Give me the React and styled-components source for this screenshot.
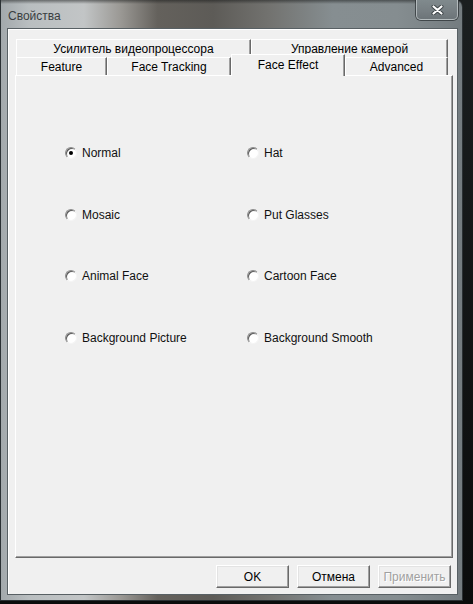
import styled, { createGlobalStyle } from "styled-components";

const GlobalStyle = createGlobalStyle`
  html, body {
    margin: 0;
    padding: 0;
    background: #0e1011;
  }
  body {
    font-family: "Liberation Sans", Arial, sans-serif;
    font-size: 12px;
    color: #000;
  }
`;

const backTabs = [
    { label: "Усилитель видеопроцессора", width: 235 },
    { label: "Управление камерой", width: 197 },
];

const frontTabs = [
    { label: "Feature", width: 91 },
    { label: "Face Tracking", width: 124 },
    { label: "Face Effect", width: 114, active: true },
    { label: "Advanced", width: 103 },
];

const options = [
    { label: "Normal", checked: true },
    { label: "Hat" },
    { label: "Mosaic" },
    { label: "Put Glasses" },
    { label: "Animal Face" },
    { label: "Cartoon Face" },
    { label: "Background Picture" },
    { label: "Background Smooth" },
];

const App = () => {
    return (
        <Screen>
            <GlobalStyle />
            <Window>
                <TitleBar>
                    <Title>Свойства</Title>
                    <CloseButton>
                        <svg width="13" height="10" viewBox="0 0 13 10">
                            <path d="M2.5 1.5 L10.5 8.5 M10.5 1.5 L2.5 8.5" stroke="#3b4245" strokeWidth="4" strokeLinecap="round" />
                            <path d="M2.5 1.5 L10.5 8.5 M10.5 1.5 L2.5 8.5" stroke="#ffffff" strokeWidth="2.2" strokeLinecap="round" />
                        </svg>
                    </CloseButton>
                </TitleBar>
                <Client>
                    <TabControl>
                        <TabRow>
                            {backTabs.map((t) => (
                                <Tab key={t.label} $width={t.width}>{t.label}</Tab>
                            ))}
                        </TabRow>
                        <TabRow>
                            {frontTabs.map((t) => (
                                <Tab key={t.label} $width={t.width} $active={t.active}>{t.label}</Tab>
                            ))}
                        </TabRow>
                        <TabPage>
                            <OptionGrid>
                                {options.map((o) => (
                                    <Option key={o.label}>
                                        <RadioMark $checked={o.checked} />
                                        <span>{o.label}</span>
                                    </Option>
                                ))}
                            </OptionGrid>
                        </TabPage>
                    </TabControl>
                    <ButtonRow>
                        <Button>OK</Button>
                        <Button>Отмена</Button>
                        <Button disabled>Применить</Button>
                    </ButtonRow>
                </Client>
            </Window>
        </Screen>
    );
};

const Screen = styled.div`
width: 473px;
height: 604px;
overflow: hidden;
background: linear-gradient(180deg, #1b1f20 0%, #0b0c0c 100%);
`;

const Window = styled.div`
width: 463px;
height: 601px;
box-sizing: border-box;
display: flex;
flex-direction: column;
padding: 0 4px 5px 6px;
border: 1px solid #2b3134;
border-top: none;
border-radius: 0 7px 0 0;
background:
    linear-gradient(180deg, rgba(20, 22, 22, 0.5) 0px, rgba(20, 22, 22, 0) 4px),
    linear-gradient(90deg, #a3a9ac 0%, #b9bec0 6%, #c2c5c6 18%, #9a9894 26%, #64615c 34%, #5d5b57 46%, #72726f 58%, #868e91 72%, #858d90 86%, #747c80 100%);
`;

const TitleBar = styled.div`
height: 28px;
flex-shrink: 0;
display: flex;
justify-content: space-between;
align-items: flex-start;
`;

const Title = styled.div`
margin: 9px 0 0 1px;
font-size: 12px;
line-height: 14px;
color: #3a3e41;
`;

const CloseButton = styled.div`
width: 42px;
height: 20px;
box-sizing: border-box;
display: flex;
align-items: center;
justify-content: center;
border: 1px solid rgba(225, 230, 232, 0.55);
border-top: none;
border-radius: 0 0 5px 5px;
box-shadow: 0 0 0 1px rgba(40, 46, 49, 0.7);
background: linear-gradient(180deg, #808a8d 0%, #767e82 60%, #6c7478 100%);
`;

const Client = styled.div`
flex: 1;
display: flex;
flex-direction: column;
padding: 10px 4px 6px 7px;
background: #f0f0f0;
border: 1px solid #586064;
box-shadow: inset 1px 1px 0 #ffffff;
`;

const TabControl = styled.div`
flex: 1;
display: flex;
flex-direction: column;
`;

const TabRow = styled.div`
display: flex;
margin-left: 1px;
height: 18px;
flex-shrink: 0;
`;

const Tab = styled.div`
width: ${(p) => p.$width}px;
height: ${(p) => (p.$active ? 22 : 18)}px;
margin-top: ${(p) => (p.$active ? -3 : 0)}px;
box-sizing: border-box;
padding-top: ${(p) => (p.$active ? 1 : 1)}px;
text-align: center;
line-height: ${(p) => (p.$active ? 19 : 17)}px;
white-space: nowrap;
background: #f0f0f0;
border-top: 1px solid #ffffff;
border-left: 1px solid #ffffff;
border-right: 1px solid #696969;
box-shadow: inset -1px 0 0 #a0a0a0;
z-index: ${(p) => (p.$active ? 2 : 1)};
`;

const TabPage = styled.div`
flex: 1;
box-sizing: border-box;
background: #f0f0f0;
border: 1px solid;
border-color: #ffffff #696969 #696969 #ffffff;
box-shadow: inset -1px -1px 0 #a0a0a0;
`;

const OptionGrid = styled.div`
display: grid;
grid-template-columns: 182px 1fr;
grid-auto-rows: 20px;
row-gap: 41.6px;
padding: 67px 0 0 49px;
`;

const Option = styled.label`
display: flex;
align-items: center;
gap: 5px;
font-size: 12px;
color: #111;
`;

const RadioMark = styled.span`
position: relative;
width: 12px;
height: 12px;
box-sizing: border-box;
border-radius: 50%;
border: 1px solid;
border-color: #8c8c8c #f4f4f4 #f4f4f4 #8c8c8c;
background: #ffffff;
box-shadow: inset 1px 1px 0 #5a5a5a;
&::after {
    content: "";
    display: ${(p) => (p.$checked ? "block" : "none")};
    position: absolute;
    left: 3px;
    top: 3px;
    width: 4px;
    height: 4px;
    border-radius: 50%;
    background: #000;
}
`;

const ButtonRow = styled.div`
display: flex;
justify-content: flex-end;
gap: 8px;
margin-top: 7px;
padding-right: 2px;
`;

const Button = styled.button`
width: 73px;
height: 23px;
box-sizing: border-box;
padding: 0;
font-family: "Liberation Sans", Arial, sans-serif;
font-size: 12px;
color: #000;
background: #f0f0f0;
border: 1px solid;
border-color: #ffffff #696969 #696969 #ffffff;
box-shadow: inset -1px -1px 0 #a0a0a0, inset 1px 1px 0 #e3e3e3;
&:disabled {
    color: #a0a0a0;
    text-shadow: 1px 1px 0 #ffffff;
}
`;

export default App;
